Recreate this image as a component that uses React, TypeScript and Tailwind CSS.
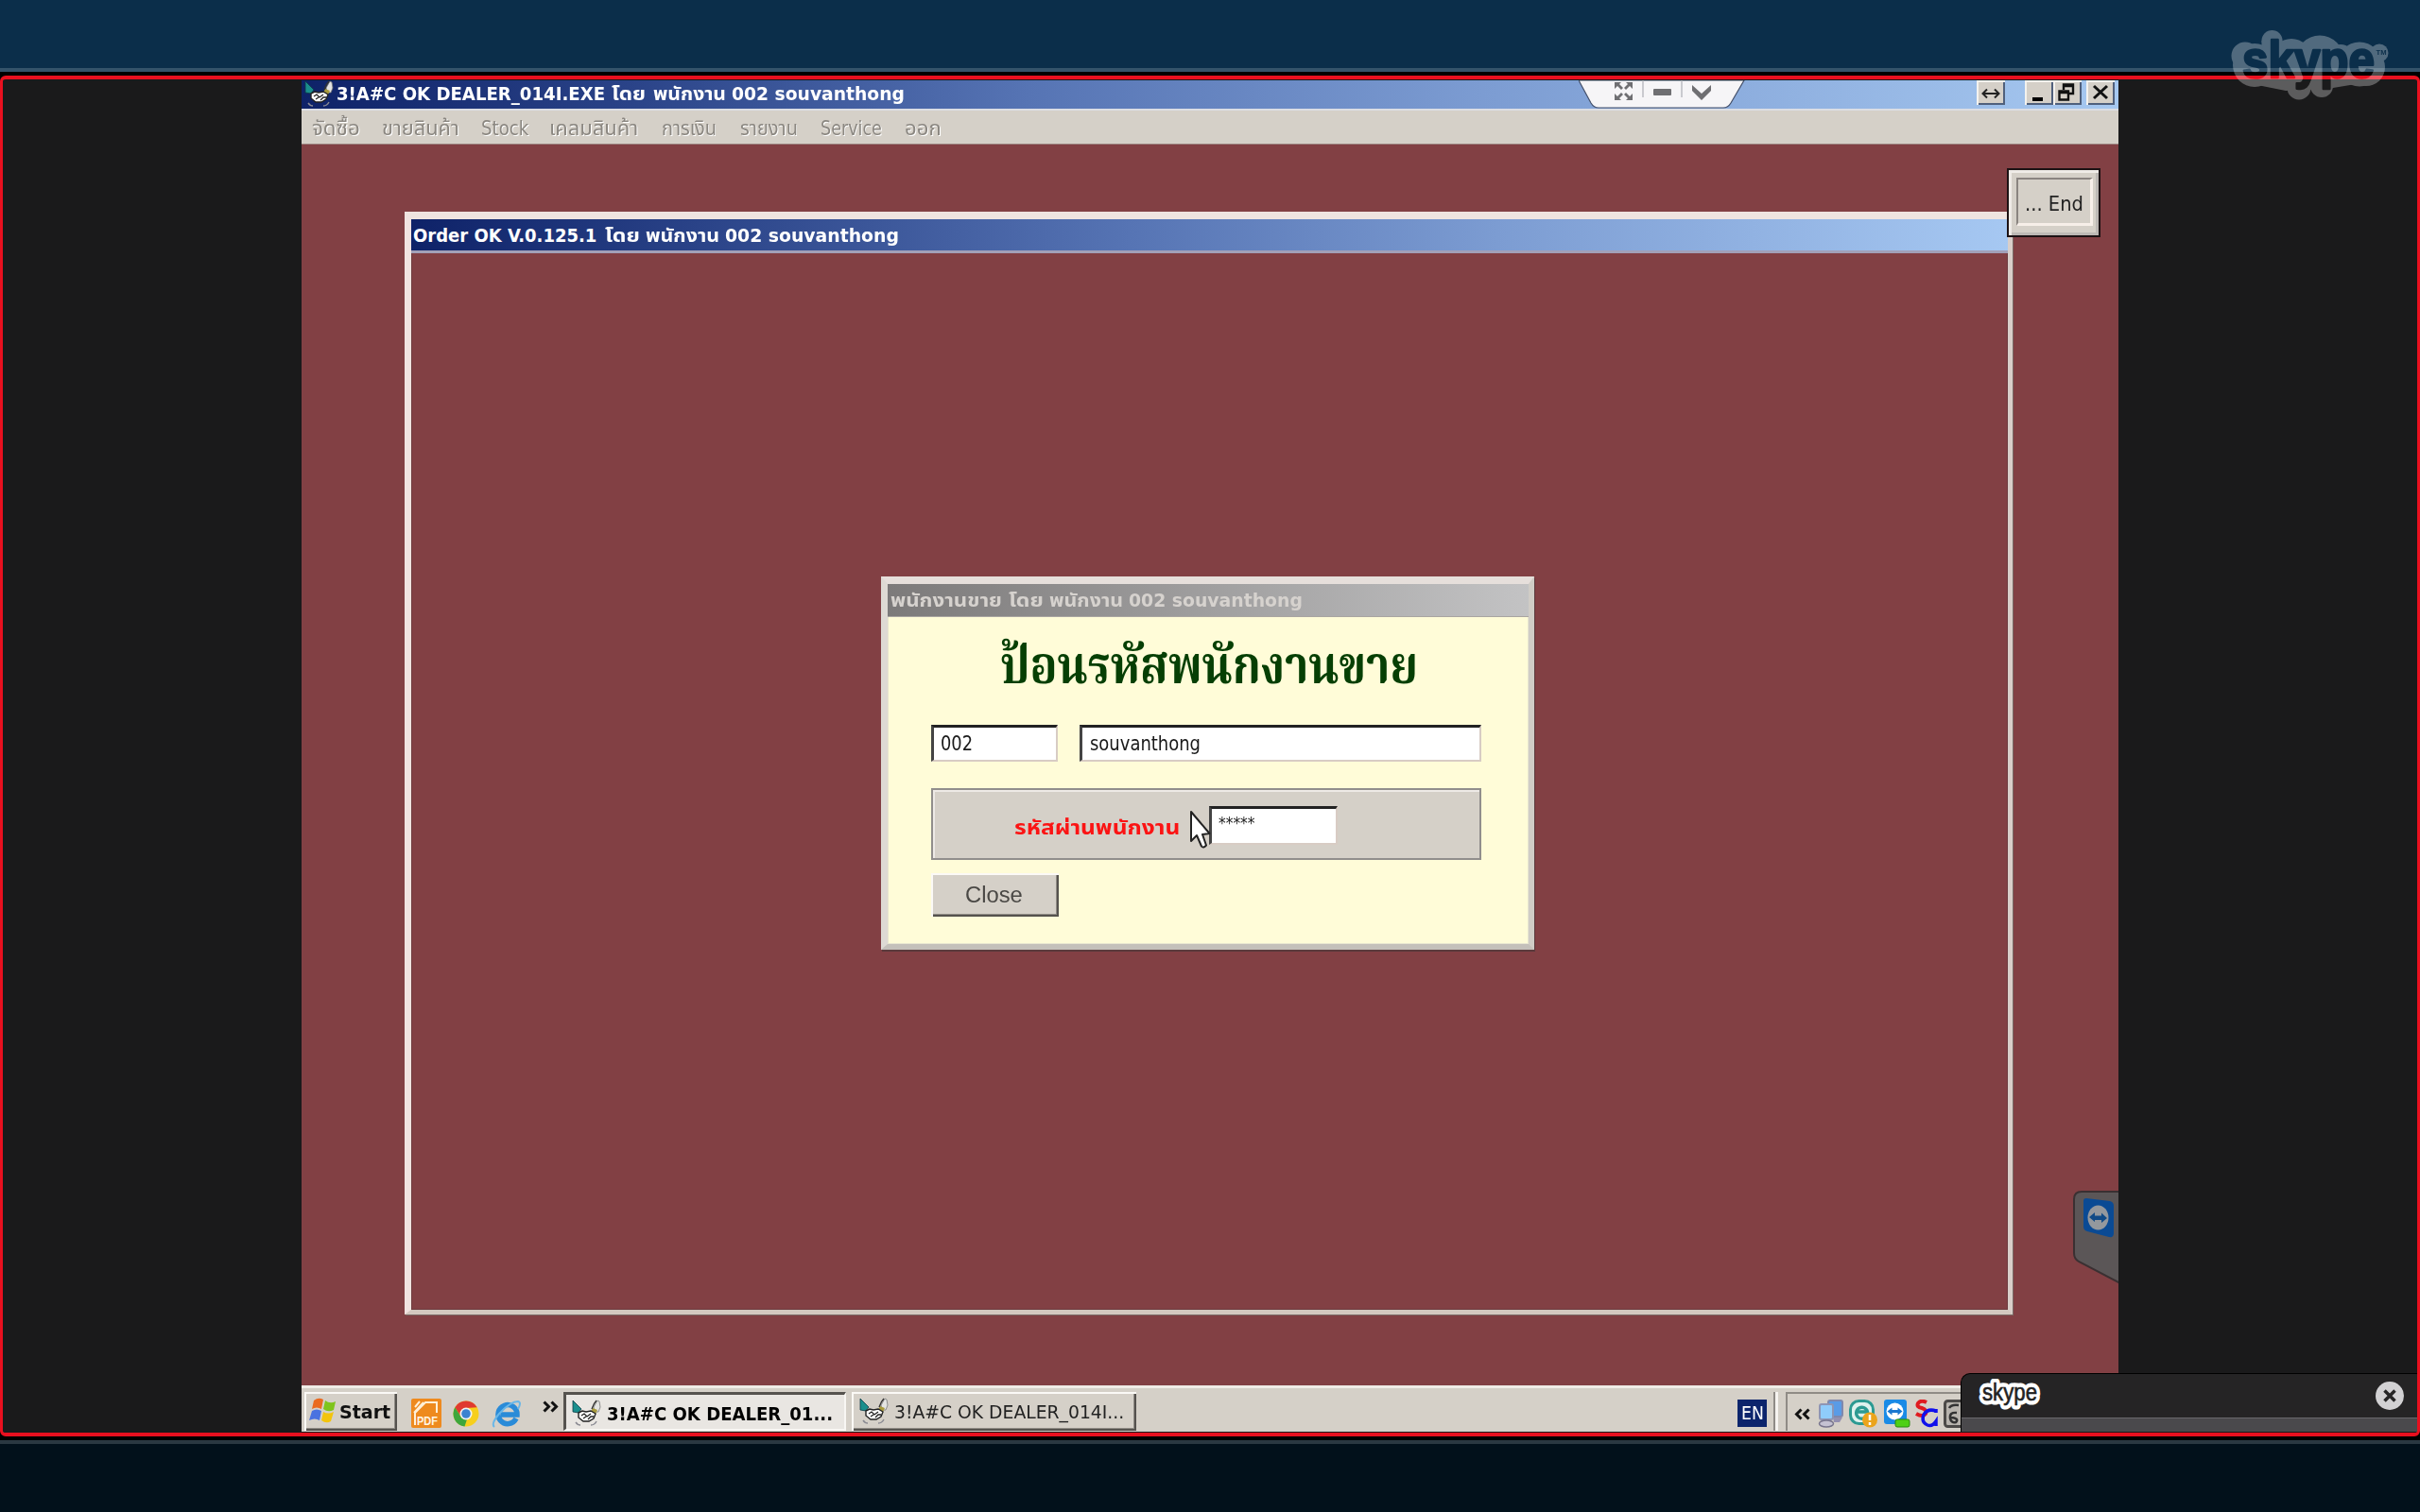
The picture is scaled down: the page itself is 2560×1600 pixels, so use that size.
import React, { useLayoutEffect, useRef, useState } from "react";

const UI = "font-[DejaVu_Sans_Condensed,DejaVu_Sans,Noto_Sans_Thai,Noto_Sans,sans-serif]";

/* Text set to an exact width by horizontal scaling. */
function Fit({ w, className = "", children }: { w: number; className?: string; children: React.ReactNode }) {
  const ref = useRef<HTMLSpanElement>(null);
  const [s, setS] = useState(1);
  useLayoutEffect(() => {
    if (ref.current && ref.current.offsetWidth) setS(w / ref.current.offsetWidth);
  }, [w]);
  return (
    <span className={"block shrink-0 " + className} style={{ width: w }}>
      <span ref={ref} className="inline-block origin-left whitespace-pre" style={{ transform: `scaleX(${s})` }}>
        {children}
      </span>
    </span>
  );
}

function Handshake({ className = "" }: { className?: string }) {
  return (
    <svg viewBox="0 0 31 28" className={"h-7 w-[31px] shrink-0 " + className}>
      <path d="M1 1 L10 10 L7 14 L1 13 Z" fill="#1a8f8d" stroke="#0d3b46" strokeWidth="0.8" />
      <path d="M23 8 L27 1 L29 2 L30 8 L28 13 L24 13 Z" fill="#e4e4e2" stroke="#777" strokeWidth="0.8" />
      <path d="M22 9 L27 11 L25 15 L20 13 Z" fill="#a99b3c" />
      <path d="M7 14 L11 12 L15 13 L20 12 L25 15 L23 20 L18 23 L12 23 L7 19 Z" fill="#fff" stroke="#222" strokeWidth="1.4" />
      <path d="M10 17 L13 15 L16 18 L20 15 M12 20 L15 18 M17 21 L20 18 L23 18" fill="none" stroke="#222" strokeWidth="1.3" />
      <path d="M4 24 Q6 27 9 27 M26 23 Q24 27 20 27" fill="none" stroke="#8a8a92" strokeWidth="1.4" />
      <path d="M21 10 Q23 4 26 1" stroke="#333" strokeWidth="1.4" fill="none" />
    </svg>
  );
}

const RAISED = "bg-[#d5d0c8] shadow-[inset_2px_2px_0_#fbf9f6,inset_-2px_-2px_0_#55524e,inset_-3px_-3px_0_#8f8b85]";

function CaptionButton({ children, className = "" }: { children: React.ReactNode; className?: string }) {
  return (
    <div className={"flex h-[26px] w-[30px] items-center justify-center bg-[#d5d0c8] shadow-[inset_2px_2px_0_#f4f2ee,inset_-2px_-2px_0_#50607c] " + className}>
      <svg viewBox="0 0 30 26" className="h-[26px] w-[30px]">{children}</svg>
    </div>
  );
}

function TitleBar() {
  return (
    <div className="relative flex h-[30px] items-start bg-[linear-gradient(90deg,#0e2268_0%,#2a4388_18%,#5674b4_40%,#7c9cd2_65%,#a6c8f0_100%)]">
      <Handshake className="ml-[3px]" />
      <div className={"ml-[3px] flex h-[29px] text-[20px] leading-[29px] font-bold text-white " + UI}>
        <Fit w={284}>3!A#C OK DEALER_014I.EXE</Fit>
        <Fit w={36} className="ml-[7px]">โดย</Fit>
        <Fit w={77} className="ml-2">พนักงาน</Fit>
        <Fit w={183} className="ml-[6px]">002 souvanthong</Fit>
      </div>
      <svg viewBox="0 0 176 31" className="absolute top-0 left-[1351px] h-[31px] w-[176px]">
        <path d="M0 0 L13 24 Q16 29 21 29 L153 29 Q158 29 161 24 L175 0 Z" fill="#f6f5f7" stroke="#44506a" strokeWidth="1.2" />
        <g fill="#6f6f72">
          <path d="M38 2h7l-2 2 4 4-2 2-4-4-3 3zM57 2h-7l2 2-4 4 2 2 4-4 3 3zM38 21h7l-2-2 4-4-2-2-4 4-3-3zM57 21h-7l2-2-4-4 2-2 4 4 3-3z" />
          <rect x="79" y="9" width="19" height="7" rx="1" />
          <path d="M120 5 L130 14 L140 5 L140 11 L130 21 L120 11 Z" />
        </g>
        <path d="M68 0V18M109 0V18" stroke="#bcbcc2" strokeWidth="1.5" />
      </svg>
      <div className="ml-auto flex pr-[4px]">
        <CaptionButton>
          <path d="M7 14H23M11 9.5L6.5 14L11 18.5M19 9.5L23.5 14L19 18.5" fill="none" stroke="#222" strokeWidth="2" />
        </CaptionButton>
        <CaptionButton className="ml-[21px]">
          <rect x="8" y="18" width="11" height="4" fill="#000" />
        </CaptionButton>
        <CaptionButton>
          <path d="M11 10V4.500H21V14H17M11 6H21M6.500 11.500H16V20.500H6.500ZM6.500 13H16" fill="none" stroke="#111" strokeWidth="2.4" />
        </CaptionButton>
        <CaptionButton className="ml-[5px]">
          <path d="M8 6L22 19M22 6L8 19" stroke="#111" strokeWidth="3" />
        </CaptionButton>
      </div>
    </div>
  );
}

function MenuBar() {
  return (
    <div className={"flex h-[38px] border-t-2 border-b border-t-[#dcdee4] border-b-[#9b827e] bg-[#d5d0c8] pl-[11px] text-[21px] leading-[38px] text-[#8b8781] [text-shadow:1px_1px_0_#fff] " + UI}>
      <Fit w={51}>จัดซื้อ</Fit>
      <Fit w={82} className="ml-[23px]">ขายสินค้า</Fit>
      <Fit w={50} className="ml-[23px]">Stock</Fit>
      <Fit w={94} className="ml-[22px]">เคลมสินค้า</Fit>
      <Fit w={58} className="ml-[25px]">การเงิน</Fit>
      <Fit w={61} className="ml-[25px]">รายงาน</Fit>
      <Fit w={65} className="ml-6">Service</Fit>
      <Fit w={39} className="ml-6">ออก</Fit>
    </div>
  );
}

function OrderWindow() {
  return (
    <div className="absolute top-[139px] left-[109px] h-[1167px] w-[1701px] border-t-[8px] border-r-[5px] border-b-[5px] border-l-[7px] border-t-[#efe4e0] border-r-[#d9cfca] border-b-[#d3c8bf] border-l-[#f0e3e0] bg-[#824044] shadow-[inset_0_0_0_1px_#6d3b3f,1px_1px_0_#7a6a66]">
      <div className={"flex h-9 border-b-[3px] border-b-[#a2a0b8] bg-[linear-gradient(90deg,#0e2268_0%,#2a4388_18%,#5674b4_45%,#7c9cd2_68%,#a6c8f2_100%)] pl-[2px] text-[20px] leading-[34px] font-bold text-white " + UI}>
        <Fit w={194}>Order OK V.0.125.1</Fit>
        <Fit w={37} className="ml-[9px]">โดย</Fit>
        <Fit w={78} className="ml-[6px]">พนักงาน</Fit>
        <Fit w={184} className="ml-[6px]">002 souvanthong</Fit>
      </div>
    </div>
  );
}

function EndButton() {
  return (
    <div className="absolute top-[93px] left-[1804px] h-[73px] w-[99px] border-2 border-[#1c1214] bg-[#d5d0c8] p-2 shadow-[inset_3px_3px_0_#efebe7,inset_-3px_-3px_0_#bdb9b5]">
      <div className={"flex h-[51px] w-[81px] justify-center border-t-2 border-r-[3px] border-b-[3px] border-l-2 border-t-[#8a8480] border-r-[#f7efe9] border-b-[#f7efe9] border-l-[#8a8480] text-[21px] leading-[53px] text-[#222] " + UI}>
        <Fit w={62}>... End</Fit>
      </div>
    </div>
  );
}

const FIELD = "border-t-[3px] border-l-[3px] border-r-2 border-b-2 border-t-[#222] border-l-[#444] border-r-[#d8ccc4] border-b-[#d8ccc4] bg-white text-[#1a1a1a]";

function LoginDialog() {
  return (
    <div className="absolute top-[525px] left-[613px] h-[395px] w-[691px] border-t-[8px] border-r-[6px] border-b-[6px] border-l-[7px] border-t-[#e6dfdb] border-r-[#d0ccc6] border-b-[#c4c0ba] border-l-[#dedad4] bg-[#fffcd8] shadow-[inset_0_0_0_1px_#e8e6d0,1px_2px_0_#5a3a3c]">
      <div className={"flex h-[35px] border-b border-b-[#a9a5a1] bg-[linear-gradient(90deg,#7c7a7a,#c3c3c4)] pl-[3px] text-[20px] leading-[35px] font-bold text-[#d6d2ce] " + UI}>
        <Fit w={118}>พนักงานขาย</Fit>
        <Fit w={37} className="ml-[7px]">โดย</Fit>
        <Fit w={78} className="ml-[6px]">พนักงาน</Fit>
        <Fit w={184} className="ml-[6px]">002 souvanthong</Fit>
      </div>
      <div className="pr-[50px] pl-[46px]">
        <div className="flex h-[114px] pl-[73px] font-[Norasi,Kinnari,Noto_Serif_Thai,Liberation_Serif,serif] text-[55px] leading-[110px] font-bold text-[#063f04]">
          <Fit w={442}>ป้อนรหัสพนักงานขาย</Fit>
        </div>
        <div className={"flex text-[21px] leading-[34px] " + UI}>
          <div className={"h-[39px] w-[134px] pl-[7px] " + FIELD}>
            <Fit w={34}>002</Fit>
          </div>
          <div className={"ml-[23px] h-[39px] w-[426px] pl-2 " + FIELD}>
            <Fit w={117}>souvanthong</Fit>
          </div>
        </div>
        <div className={"mt-[28px] flex h-[76px] w-[582px] border-2 border-[#918e8c] bg-[#d5d0c8] pt-[17px] pl-[86px] shadow-[inset_2px_2px_0_#eeeae6] " + UI}>
          <Fit w={175} className="text-[21px] leading-[46px] font-bold text-[#fb1414]">รหัสผ่านพนักงาน</Fit>
          <div className={"ml-[31px] h-[41px] w-[136px] pl-[7px] text-[18px] leading-[29px] " + FIELD}>
            <Fit w={38}>*****</Fit>
          </div>
        </div>
        <div className={"mt-[14px] flex h-[46px] w-[135px] justify-center font-['Liberation_Sans'] text-[23px] leading-[47px] text-[#4a4845] " + RAISED}>
          <Fit w={61} className="-ml-[3px]">Close</Fit>
        </div>
      </div>
      <svg viewBox="0 0 24 42" className="absolute top-[239px] left-[319px] h-[42px] w-6">
        <path d="M2 2 L2 33 L8 27 L13 38.500 Q15 41 18 37.500 L14 26 L21.500 25 Z" fill="#fff" stroke="#222" strokeWidth="2" strokeLinejoin="round" />
      </svg>
    </div>
  );
}

function TeamViewerTab() {
  return (
    <svg viewBox="0 0 48 98" className="absolute top-[1175px] right-0 h-[98px] w-12">
      <path d="M50 1 H9 Q1 1 1 9 V66 Q1 72 6 75 L50 98 Z" fill="#5b5657" stroke="#3a3032" strokeWidth="2" />
      <path d="M14 8 L39 11 Q43 12 43 16 V45 Q43 50 38 49 L15 43 Q11 42 11 38 V11 Q11 8 14 8 Z" fill="#0a4a94" />
      <ellipse cx="26.500" cy="28.500" rx="11" ry="13" fill="#94989d" />
      <path d="M17 28 L23 23 V26.500 H30 V23.500 L36 29 L30 34 V31 H23 V33 Z" fill="#114a86" />
    </svg>
  );
}

function WindowsFlag() {
  return (
    <svg viewBox="0 0 30 28" className="h-7 w-[30px]">
      <path d="M5 4 Q10 0 15 3 L13 13 Q8 10 3 13 Z" fill="#ea6a20" />
      <path d="M17 4 Q22 8 28 5 L26 14 Q20 17 15 13 Z" fill="#7fc41c" />
      <path d="M3 15 Q8 12 13 15 L11 25 Q6 22 0 25 Z" fill="#4a72e0" />
      <path d="M15 16 Q20 19 26 16 L23 26 Q18 29 13 25 Z" fill="#f3c40d" />
    </svg>
  );
}

function ChromeIcon() {
  return (
    <svg viewBox="0 0 28 28" className="h-7 w-7">
      <circle cx="14" cy="14" r="13.500" fill="#f7cf1c" />
      <path d="M2.300 7.250 A13.500 13.500 0 0 1 25.700 7.250 L14 8 L8.500 17 Z" fill="#e03a30" />
      <path d="M2.300 7.250 L9 18 L15 20 L12.500 27.500 A13.500 13.500 0 0 1 2.300 7.250" fill="#3da63c" />
      <circle cx="14" cy="14" r="6.500" fill="#f3f3f0" />
      <circle cx="14" cy="14" r="4.800" fill="#3b82d0" />
    </svg>
  );
}

function PdfIcon() {
  return (
    <svg viewBox="0 0 32 31" className="h-[31px] w-8">
      <rect width="32" height="31" rx="2" fill="#ee8a1e" />
      <path d="M4 28 V15 L15 4 H27 V15 M4 9 L9 3 M3 15 L13 4" fill="none" stroke="#fff0d8" strokeWidth="2" />
      <text x="6" y="28" fontSize="12" fontWeight="bold" fontFamily="Liberation Sans" fill="#fff5e6" textLength="22" lengthAdjust="spacingAndGlyphs">PDF</text>
    </svg>
  );
}

function IeIcon() {
  return (
    <svg viewBox="0 0 32 31" className="h-[31px] w-8">
      <path d="M26 20 A10 10 0 1 1 27 16 H10" fill="none" stroke="#2a8bd8" strokeWidth="5.500" />
      <path d="M3 29 Q-1 26 8 15 Q20 2 28 2 Q32 3 28 10" fill="none" stroke="#69b7e8" strokeWidth="2" />
    </svg>
  );
}

function Chevrons({ left = false }: { left?: boolean }) {
  return (
    <svg viewBox="0 0 17 13" className={"h-[13px] w-[17px] " + (left ? "rotate-180" : "")}>
      <path d="M1.500 1.500L6.500 6.500L1.500 11.500M9.500 1.500L14.500 6.500L9.500 11.500" fill="none" stroke="#111" strokeWidth="3" />
    </svg>
  );
}

function Tray() {
  return (
    <div className="ml-2 flex h-[41px] w-[352px] border-t-2 border-l-2 border-[#8f8b86] pt-[6px] pl-[7px]">
      <div className="mt-[9px]"><Chevrons left /></div>
      <svg viewBox="0 0 28 30" className="ml-2 h-[30px] w-7">
        <rect x="11" y="1" width="15" height="17" rx="2" fill="#5a9be6" stroke="#8088ac" strokeWidth="2" />
        <path d="M16 19 H26 L23 24 H17 Z" fill="#9490b0" />
        <rect x="2" y="5" width="14" height="16" rx="2" fill="#8fccfb" stroke="#8e95b4" strokeWidth="2" />
        <ellipse cx="9" cy="25.500" rx="7.500" ry="3.500" fill="#c5c2d2" stroke="#77748c" strokeWidth="1.500" />
      </svg>
      <svg viewBox="0 0 31 30" className="ml-[5px] h-[30px] w-[31px]">
        <rect x="1.500" y="1.500" width="24" height="24" rx="9" fill="#dff2ee" stroke="#2c9a92" strokeWidth="3" />
        <path d="M19 17 A6 6 0 1 1 19.500 13 H9" fill="none" stroke="#2c9a92" strokeWidth="3.400" />
        <circle cx="22" cy="21.500" r="8" fill="#eba41c" />
        <path d="M22 16V22M22 24V27" stroke="#fff" strokeWidth="2.500" />
      </svg>
      <svg viewBox="0 0 29 30" className="ml-[5px] h-[30px] w-[29px]">
        <rect x="1" y="0" width="24" height="26" rx="3" fill="#1a8be6" />
        <circle cx="12.500" cy="12.500" r="9" fill="#fff" />
        <path d="M4.500 12.500L9.500 8.500V11H15.500V8.500L20.500 12.500L15.500 16.500V14H9.500V16.500Z" fill="#1a78d0" />
        <rect x="13" y="21" width="15" height="8" rx="2" fill="#4fd015" stroke="#2a8a10" />
      </svg>
      <svg viewBox="0 0 24 30" className="ml-[5px] h-[30px] w-6">
        <path d="M12 3 Q6 0 3 4 Q1 8 7 9 Q13 11 11 15 Q8 19 1 15" fill="none" stroke="#e01b20" strokeWidth="4" />
        <path d="M22 14 V10 M22 12 Q13 9 9 16 Q6 24 13 27 Q18 29 22 23 V28" fill="none" stroke="#1010ec" strokeWidth="3.500" />
      </svg>
      <svg viewBox="0 0 30 30" className="ml-[6px] h-[30px] w-[30px]">
        <rect x="1.500" y="1.500" width="28" height="27" rx="3" fill="#b8b4ae" stroke="#4c4a48" strokeWidth="3" />
        <path d="M6 9 Q8 5 16 6" fill="none" stroke="#333" strokeWidth="2.500" />
        <path d="M14 14 Q6 13 7 20 Q8 25 13 24 Q17 20 8 19" fill="none" stroke="#333" strokeWidth="2.500" />
      </svg>
    </div>
  );
}

function Taskbar() {
  return (
    <div className={"absolute bottom-0 left-0 flex h-[49px] w-full border-t-[3px] border-t-[#f0ece7] bg-[#d5d0c8] pt-[4px] pl-[3px] " + UI}>
      <div className={"flex h-[41px] w-[98px] pt-[5px] pl-[5px] text-[20px] leading-[34px] font-bold text-[#111] " + RAISED}>
        <WindowsFlag />
        <Fit w={54} className="ml-[2px] -mt-px">Start</Fit>
      </div>
      <div className="ml-[15px] flex pt-[7px]">
        <PdfIcon />
        <div className="ml-[12px] pt-[2px]"><ChromeIcon /></div>
        <div className="ml-[13px] pt-px"><IeIcon /></div>
        <div className="ml-[22px] pt-[2px]"><Chevrons /></div>
      </div>
      <div className="ml-[5px] flex h-[41px] w-[299px] border-t-[3px] border-r-2 border-b-2 border-l-[3px] border-t-[#55524e] border-r-[#f8f6f3] border-b-[#f8f6f3] border-l-[#55524e] bg-[#e9e6e2] pt-[5px] pl-[6px] text-[20px] leading-[31px] font-bold text-black">
        <Handshake />
        <Fit w={239} className="ml-[6px]">3!A#C OK DEALER_01...</Fit>
      </div>
      <div className={"ml-[6px] flex h-[41px] w-[301px] pt-[7px] pl-2 text-[20px] leading-[30px] text-[#222] " + RAISED}>
        <Handshake className="-mt-px" />
        <Fit w={243} className="ml-[6px] -mt-px">3!A#C OK DEALER_014I...</Fit>
      </div>
      <div className="mt-2 ml-[636px] flex h-[29px] w-[31px] justify-center bg-[#0c246c] text-[20px] leading-[29px] text-white">
        <Fit w={24}>EN</Fit>
      </div>
      <div className="ml-[7px] h-[41px] w-[5px] border-r-[3px] border-l-2 border-r-[#f6f3ef] border-l-[#8f8b86]" />
      <Tray />
    </div>
  );
}

function SkypeWatermark() {
  return (
    <svg viewBox="0 0 172 78" className="absolute top-[30px] left-[2358px] h-[78px] w-[172px]">
      <mask id="skypeMask" maskUnits="userSpaceOnUse" x="0" y="0" width="172" height="78">
        <g fill="#fff">
          <circle cx="17" cy="29" r="14.500" /><circle cx="27" cy="39" r="23" /><circle cx="45.500" cy="13" r="11" />
          <rect x="34.500" y="13" width="22" height="40" /><circle cx="66" cy="32" r="21" />
          <circle cx="96" cy="33" r="25.500" /><circle cx="138" cy="38" r="23.500" /><circle cx="159" cy="26" r="9.500" />
          <circle cx="118" cy="31" r="14" /><circle cx="145" cy="41" r="20" /><path d="M24 45H140V58L104 64L60 66L30 60Z" />
          <circle cx="74" cy="63" r="12.500" /><circle cx="98" cy="61" r="12" />
        </g>
        <text x="14" y="51.500" fontFamily="Liberation Sans" fontWeight="bold" fontSize="56" textLength="140" lengthAdjust="spacingAndGlyphs" fill="#000" stroke="#000" strokeWidth="2.600" strokeLinejoin="round">skype</text>
        <text x="155.500" y="27.500" fontFamily="Liberation Sans" fontWeight="bold" fontSize="8" textLength="11" lengthAdjust="spacingAndGlyphs" fill="#000">TM</text>
      </mask>
      <rect width="172" height="78" fill="#fff" fillOpacity="0.29" mask="url(#skypeMask)" />
    </svg>
  );
}

function SkypePanel() {
  return (
    <div className="absolute top-[1453px] left-[2074px] flex h-[62px] w-[483px] flex-col overflow-hidden rounded-tl-[10px] border-t border-l border-black bg-[#252425]">
      <div className="flex h-[46px] items-center justify-between pr-[14px] pl-[15px]">
        <svg viewBox="0 0 72 36" className="h-9 w-[72px]">
          <text x="7" y="23" fontFamily="Liberation Sans" fontSize="25" textLength="58" lengthAdjust="spacingAndGlyphs" fill="#fff" stroke="#fff" strokeWidth="9" strokeLinejoin="round">skype</text>
          <text x="7" y="23" fontFamily="Liberation Sans" fontSize="25" textLength="58" lengthAdjust="spacingAndGlyphs" fill="#222" stroke="#222" strokeWidth="0.600">skype</text>
        </svg>
        <svg viewBox="0 0 30 30" className="h-[30px] w-[30px]">
          <circle cx="15" cy="15" r="15" fill="#d2d1d3" />
          <path d="M9.500 9.500L20.500 20.500M20.500 9.500L9.500 20.500" stroke="#252425" strokeWidth="3.500" />
        </svg>
      </div>
      <div className="flex-1 border-t border-[#68676b] bg-[#4a494c]" />
    </div>
  );
}

export default function App() {
  return (
    <div className="relative flex h-[1600px] w-[2560px] flex-col overflow-hidden bg-black">
      <div className="h-[76px] shrink-0 border-b-4 border-[#34536a] bg-[#0b2e4a]" />
      <div className="mt-1 flex h-[1440px] shrink-0 justify-center rounded-[6px] border-x-[3px] border-y-4 border-[#e9101f] bg-[#1a1a1b] pt-px pb-px">
        <div className="relative h-[1430px] w-[1922px] overflow-hidden bg-[#824044]">
          <TitleBar />
          <MenuBar />
          <OrderWindow />
          <EndButton />
          <LoginDialog />
          <TeamViewerTab />
          <Taskbar />
        </div>
      </div>
      <div className="mt-1 flex-1 border-t-4 border-[#2a3841] bg-[#02111b]" />
      <SkypeWatermark />
      <SkypePanel />
    </div>
  );
}
